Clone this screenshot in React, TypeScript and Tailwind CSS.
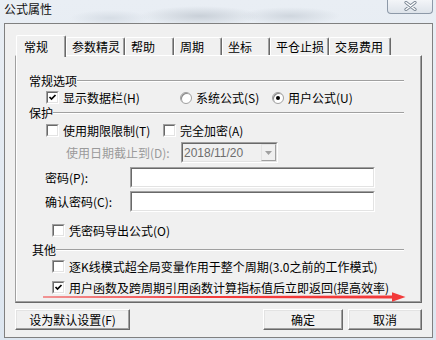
import React from "react";

const TABS = [
  { label: "常规", w: "w-[50px]" },
  { label: "参数精灵", w: "w-[59px]" },
  { label: "帮助", w: "w-[49px]" },
  { label: "周期", w: "w-[48px]" },
  { label: "坐标", w: "w-[48px]" },
  { label: "平仓止损", w: "w-[59px]" },
  { label: "交易费用", w: "w-[62px]" },
];

function Check({ checked }: { checked?: boolean }) {
  return (
    <span className="block w-[13px] h-[13px] shrink-0 border border-t-[#a0a0a0] border-l-[#a0a0a0] border-b-white border-r-white">
      <span className="flex w-full h-full items-center justify-center bg-white border border-t-[#696969] border-l-[#696969] border-b-[#e3e3e3] border-r-[#e3e3e3]">
        {checked && (
          <svg width="9" height="9" viewBox="0 0 9 9">
            <path d="M1.5 4 L3.5 6 L7.5 2" fill="none" stroke="#000" strokeWidth="1.7" />
          </svg>
        )}
      </span>
    </span>
  );
}

function Radio({ checked }: { checked?: boolean }) {
  return (
    <span className="flex w-[12px] h-[12px] shrink-0 items-center justify-center rounded-full border border-[#a0a0a0] bg-white shadow-[inset_1px_1px_0_#8a8a8a]">
      {checked && <span className="block w-[4px] h-[4px] rounded-full bg-black" />}
    </span>
  );
}

function Group({ label, className }: { label: string; className: string }) {
  return (
    <div className={`flex items-center h-[14px] mr-[17px] ${className}`}>
      <span className="leading-[14px] w-full max-w-fit shrink-0">{label}</span>
      <div className="flex-1 h-[2px] border-t border-t-[#a0a0a0] border-b border-b-white" />
    </div>
  );
}

function Sunken({ className, children }: { className: string; children?: React.ReactNode }) {
  return (
    <div className={`border border-t-[#a0a0a0] border-l-[#a0a0a0] border-b-white border-r-white ${className}`}>
      <div className="flex w-full h-full border border-t-[#696969] border-l-[#696969] border-b-[#e3e3e3] border-r-[#e3e3e3]">
        {children}
      </div>
    </div>
  );
}

function Btn({ className, children }: { className: string; children: React.ReactNode }) {
  return (
    <div
      className={`h-[21px] flex items-center justify-center leading-[14px] bg-[#f0f0f0] border border-t-white border-l-white border-r-[#696969] border-b-[#696969] shadow-[inset_-1px_-1px_0_#a0a0a0,inset_1px_1px_0_#e3e3e3] ${className}`}
    >
      {children}
    </div>
  );
}

export default function App() {
  return (
    <div className="relative w-[436px] h-[340px] overflow-hidden font-['Noto_Sans_CJK_SC',sans-serif] text-[12px] text-black bg-[radial-gradient(ellipse_60px_10px_at_200px_16px,#c9d0d8,transparent),radial-gradient(ellipse_50px_9px_at_290px_16px,#cfd6de,transparent),radial-gradient(ellipse_40px_8px_at_110px_18px,#d6dde5,transparent),linear-gradient(180deg,#e9eef4_0%,#dde6f0_100%)]">
      {/* title bar */}
      <div className="h-[23px] flex items-start justify-between">
        <span className="pl-[4px] pt-[2px] leading-[14px] text-[12px] text-[#111]">公式属性</span>
        <div className="mr-[3px] w-[46px] h-[14px] flex justify-center pt-[1px] rounded-b-[4px] border border-t-0 border-[#8d99a8] bg-gradient-to-b from-[#f3f5f8] to-[#dde3ea]">
          <svg width="13" height="10" viewBox="0 0 13 10">
            <path d="M2 1.5 L11 8.5 M11 1.5 L2 8.5" stroke="#7b8794" strokeWidth="3.2" strokeLinecap="round" />
            <path d="M2 1.5 L11 8.5 M11 1.5 L2 8.5" stroke="#ffffff" strokeWidth="1.4" strokeLinecap="round" />
          </svg>
        </div>
      </div>

      {/* client area */}
      <div className="ml-[4px] w-[429px] h-[315px] flex flex-col border border-[#808080] bg-[#f0f0f0]">
        {/* tabs */}
        <div className="ml-[11px] mt-[11px] flex items-end">
          {TABS.map((t, i) =>
            i === 0 ? (
              <div
                key={t.label}
                className={`${t.w} relative z-10 h-[22px] -mb-[2px] pl-[7px] pt-[4px] leading-[14px] bg-[#f0f0f0] rounded-t-[2px] border-l border-t border-l-white border-t-white border-r border-r-[#696969] shadow-[inset_-1px_0_0_#a0a0a0]`}
              >
                {t.label}
              </div>
            ) : (
              <div
                key={t.label}
                className={`${t.w} h-[18px] flex items-center pl-[5px] leading-[14px] rounded-t-[2px] border-l border-t border-l-white border-t-white border-r border-r-[#696969] shadow-[inset_-1px_0_0_#a0a0a0]`}
              >
                {t.label}
              </div>
            )
          )}
        </div>

        {/* tab panel */}
        <div className="ml-[10px] w-[407px] h-[248px] flex flex-col border border-l-[#a0a0a0] border-t-white border-r-[#696969] border-b-[#696969] shadow-[inset_-1px_-1px_0_#a0a0a0,inset_1px_0_0_#ffffff]">
          <Group label="常规选项" className="mt-[18px] pl-[13px] [&>span]:w-[55px]" />
          <div className="mt-[3px] h-[13px] flex items-center pl-[30px] leading-[13px]">
            <div className="w-[134px] flex items-center gap-[4px]">
              <Check checked />
              <span>显示数据栏(H)</span>
            </div>
            <div className="w-[92px] flex items-center gap-[4px]">
              <Radio />
              <span>系统公式(S)</span>
            </div>
            <div className="flex items-center gap-[4px]">
              <Radio checked />
              <span>用户公式(U)</span>
            </div>
          </div>

          <Group label="保护" className="mt-[2px] pl-[13px] [&>span]:w-[55px]" />
          <div className="mt-[4px] h-[13px] flex items-center pl-[30px] leading-[13px]">
            <div className="w-[117px] flex items-center gap-[4px]">
              <Check />
              <span>使用期限限制(T)</span>
            </div>
            <div className="flex items-center gap-[4px]">
              <Check />
              <span>完全加密(A)</span>
            </div>
          </div>
          <div className="mt-[5px] h-[21px] flex items-center pl-[50px]">
            <span className="w-[115px] leading-[14px] text-[#9a9a9a]">使用日期截止到(D):</span>
            <Sunken className="w-[97px] h-[21px]">
              <div className="flex-1 flex items-center pl-[1px] bg-[#f0f0f0] font-['Liberation_Sans',sans-serif] text-[12px] text-[#6d6d6d]">
                2018/11/20
              </div>
              <div className="w-[15px] h-full flex items-center justify-center bg-[#f0f0f0] border border-t-[#e3e3e3] border-l-[#e3e3e3] border-r-[#a0a0a0] border-b-[#a0a0a0]">
                <svg width="7" height="4" viewBox="0 0 7 4">
                  <path d="M0 0 L7 0 L3.5 4 Z" fill="#a0a0a0" />
                </svg>
              </div>
            </Sunken>
          </div>

          <div className="mt-[4px] h-[21px] flex items-center pl-[29px]">
            <span className="w-[85px] leading-[14px]">密码(P):</span>
            <Sunken className="w-[245px] h-[21px] bg-white" />
          </div>
          <div className="mt-[3px] h-[21px] flex items-center pl-[29px]">
            <span className="w-[85px] leading-[14px]">确认密码(C):</span>
            <Sunken className="w-[245px] h-[21px] bg-white" />
          </div>

          <div className="mt-[12px] h-[13px] flex items-center gap-[4px] pl-[36px] leading-[13px]">
            <Check />
            <span>凭密码导出公式(O)</span>
          </div>

          <Group label="其他" className="mt-[6px] pl-[16px] [&>span]:w-[52px]" />
          <div className="mt-[3px] h-[13px] flex items-center gap-[4px] pl-[36px] leading-[13px]">
            <Check />
            <span>逐K线模式超全局变量作用于整个周期(3.0之前的工作模式)</span>
          </div>
          <div className="mt-[8px] h-[13px] flex items-center gap-[4px] pl-[36px] leading-[13px]">
            <Check checked />
            <span>用户函数及跨周期引用函数计算指标值后立即返回(提高效率)</span>
          </div>
        </div>

        {/* buttons */}
        <div className="mt-[6px] ml-[10px] mr-[10px] flex">
          <Btn className="w-[115px]">设为默认设置(F)</Btn>
          <Btn className="w-[80px] ml-auto">确定</Btn>
          <Btn className="w-[74px] ml-[5px]">取消</Btn>
        </div>
      </div>

      {/* red annotation arrow */}
      <svg className="absolute left-0 top-0 pointer-events-none" width="436" height="340" viewBox="0 0 436 340">
        <path d="M43 296.4 L394 295.4 L394 298.6 L43 297.4 Z" fill="#f23a3a" />
        <path d="M392 292.3 L405.5 297 L392 301.7 Z" fill="#f23a3a" />
      </svg>
    </div>
  );
}
